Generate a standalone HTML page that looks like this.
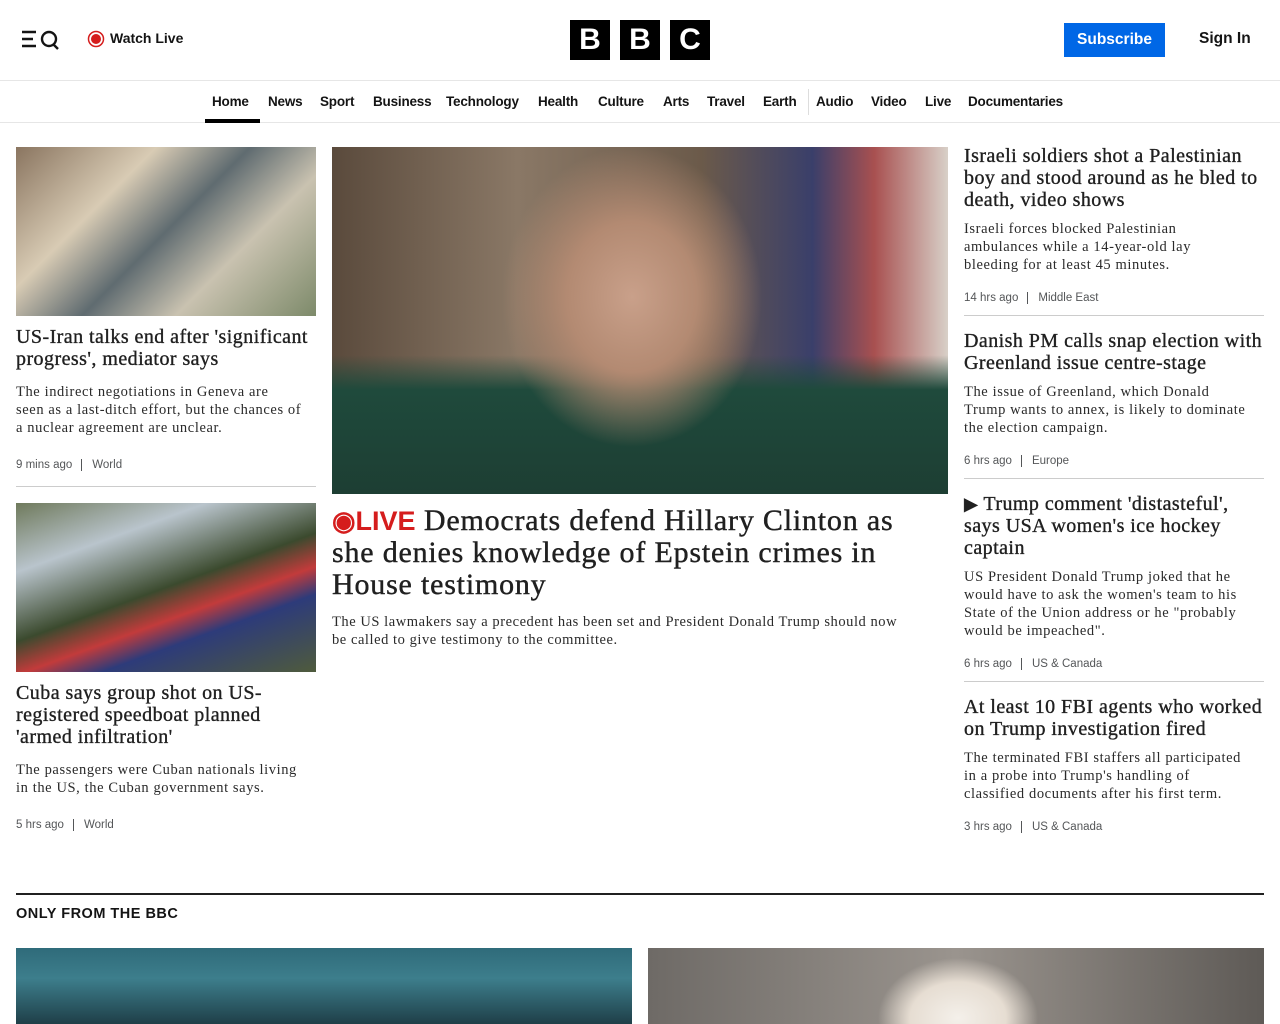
<!DOCTYPE html>
<html><head><meta charset="utf-8"><style>
*{margin:0;padding:0;box-sizing:border-box}
body{width:1280px;height:1024px;overflow:hidden;background:#fff;color:#141414;font-family:"Liberation Sans",sans-serif}
.hdr{height:81px;border-bottom:1px solid #e6e6e6;position:relative}
.nav{height:42px;border-bottom:1px solid #e6e6e6;position:relative}
.nav a{position:absolute;top:13px;font-size:13.5px;font-weight:bold;color:#141414;letter-spacing:-0.2px}
.abs{position:absolute}
h3{font-family:"Liberation Serif",serif;font-weight:normal;font-size:20px;line-height:22px;color:#202020;letter-spacing:0.45px;white-space:nowrap;-webkit-text-stroke:0.35px #202020}
p.s{font-family:"Liberation Serif",serif;font-size:14.5px;line-height:18px;color:#2a2a2a;letter-spacing:0.6px;white-space:nowrap}
.m{font-size:11.5px;color:#545658;position:absolute}
.m span{border-left:1px solid #545658;margin-left:9px;padding-left:10px}
.hr{position:absolute;height:1px;background:#ccc}
</style></head><body>
<div class="hdr">
 <svg class="abs" style="left:21px;top:30px" width="41" height="20" viewBox="0 0 41 20"><g stroke="#141414" stroke-width="2.4" fill="none"><path d="M1 2h14M1 9h11M1 16h14"/><circle cx="28" cy="9" r="7"/><path d="M32 14l5 5"/></g></svg>
 <svg class="abs" style="left:87px;top:30px" width="18" height="18"><circle cx="9" cy="9" r="7.5" fill="none" stroke="#d51d1d" stroke-width="1.5"/><circle cx="9" cy="9" r="5" fill="#d51d1d"/></svg>
 <div class="abs" style="left:110px;top:30px;font-size:14px;font-weight:bold">Watch Live</div>
 <div class="abs" style="left:570px;top:20px;display:flex;gap:10px">
  <div style="width:40px;height:40px;background:#000;color:#fff;font:bold 30px/40px 'Liberation Sans';text-align:center">B</div>
  <div style="width:40px;height:40px;background:#000;color:#fff;font:bold 30px/40px 'Liberation Sans';text-align:center">B</div>
  <div style="width:40px;height:40px;background:#000;color:#fff;font:bold 30px/40px 'Liberation Sans';text-align:center">C</div>
 </div>
 <div class="abs" style="left:1064px;top:23px;width:101px;height:34px;background:#0067e6;color:#fff;font-weight:bold;font-size:15.5px;line-height:34px;text-align:center">Subscribe</div>
 <div class="abs" style="left:1199px;top:30px;font-size:15.5px;font-weight:bold">Sign In</div>
</div>
<div class="nav">
 <a style="left:212px">Home</a><div class="abs" style="left:205px;top:38px;width:55px;height:4px;background:#000"></div>
 <a style="left:268px">News</a><a style="left:320px">Sport</a><a style="left:373px">Business</a><a style="left:446px">Technology</a><a style="left:538px">Health</a><a style="left:598px">Culture</a><a style="left:663px">Arts</a><a style="left:707px">Travel</a><a style="left:763px">Earth</a>
 <div class="abs" style="left:808px;top:8px;width:1px;height:26px;background:#ddd"></div>
 <a style="left:816px">Audio</a><a style="left:871px">Video</a><a style="left:925px">Live</a><a style="left:968px">Documentaries</a>
</div>

<!-- left -->
<div class="abs" style="left:16px;top:147px;width:300px;height:169px;background:linear-gradient(135deg,#8a7560 0%,#d8cbb4 30%,#5f6b70 50%,#c9c2b0 70%,#7d8a6a 100%)"></div>
<h3 class="abs" style="left:16px;top:326px">US-Iran talks end after 'significant<br>progress', mediator says</h3>
<p class="s abs" style="left:16px;top:383px">The indirect negotiations in Geneva are<br>seen as a last-ditch effort, but the chances of<br>a nuclear agreement are unclear.</p>
<div class="m" style="left:16px;top:459px">9 mins ago<span>World</span></div>
<div class="hr" style="left:16px;top:486px;width:300px"></div>
<div class="abs" style="left:16px;top:503px;width:300px;height:169px;background:linear-gradient(160deg,#6f7a5c 0%,#b9c4cc 25%,#3b4a2e 50%,#c23b3b 62%,#2d3b7a 72%,#4f5b3c 100%)"></div>
<h3 class="abs" style="left:16px;top:682px">Cuba says group shot on US-<br>registered speedboat planned<br>'armed infiltration'</h3>
<p class="s abs" style="left:16px;top:761px">The passengers were Cuban nationals living<br>in the US, the Cuban government says.</p>
<div class="m" style="left:16px;top:819px">5 hrs ago<span>World</span></div>

<!-- center -->
<div class="abs" style="left:332px;top:147px;width:616px;height:347px;background:radial-gradient(ellipse 130px 150px at 300px 150px,#c9a08a 0%,#b38a72 50%,transparent 100%),linear-gradient(180deg,transparent 60%,#1f4a3c 70%,#1d3e33 100%),linear-gradient(90deg,#5a4a3c 0%,#8a7866 30%,#6b5a4a 60%,#3a3f6a 78%,#a85050 88%,#d8d0c8 100%)"></div>
<div class="abs" style="left:332px;top:505px;white-space:nowrap;font-family:'Liberation Serif',serif;font-size:30px;line-height:32px;color:#202020;letter-spacing:0.8px;-webkit-text-stroke:0.4px #202020"><span style="color:#d51d1d;-webkit-text-stroke:0;font-family:'Liberation Sans';font-weight:bold;font-size:27px;letter-spacing:0">◉LIVE</span> Democrats defend Hillary Clinton as<br>she denies knowledge of Epstein crimes in<br>House testimony</div>
<p class="s abs" style="left:332px;top:613px;letter-spacing:0.55px">The US lawmakers say a precedent has been set and President Donald Trump should now<br>be called to give testimony to the committee.</p>

<!-- right -->
<h3 class="abs" style="left:964px;top:145px">Israeli soldiers shot a Palestinian<br>boy and stood around as he bled to<br>death, video shows</h3>
<p class="s abs" style="left:964px;top:220px">Israeli forces blocked Palestinian<br>ambulances while a 14-year-old lay<br>bleeding for at least 45 minutes.</p>
<div class="m" style="left:964px;top:292px">14 hrs ago<span>Middle East</span></div>
<div class="hr" style="left:964px;top:315px;width:300px"></div>
<h3 class="abs" style="left:964px;top:330px">Danish PM calls snap election with<br>Greenland issue centre-stage</h3>
<p class="s abs" style="left:964px;top:383px">The issue of Greenland, which Donald<br>Trump wants to annex, is likely to dominate<br>the election campaign.</p>
<div class="m" style="left:964px;top:455px">6 hrs ago<span>Europe</span></div>
<div class="hr" style="left:964px;top:478px;width:300px"></div>
<h3 class="abs" style="left:964px;top:493px"><span style="font-size:18px">▶</span> Trump comment 'distasteful',<br>says USA women's ice hockey<br>captain</h3>
<p class="s abs" style="left:964px;top:568px">US President Donald Trump joked that he<br>would have to ask the women's team to his<br>State of the Union address or he "probably<br>would be impeached".</p>
<div class="m" style="left:964px;top:658px">6 hrs ago<span>US &amp; Canada</span></div>
<div class="hr" style="left:964px;top:681px;width:300px"></div>
<h3 class="abs" style="left:964px;top:696px">At least 10 FBI agents who worked<br>on Trump investigation fired</h3>
<p class="s abs" style="left:964px;top:749px">The terminated FBI staffers all participated<br>in a probe into Trump's handling of<br>classified documents after his first term.</p>
<div class="m" style="left:964px;top:821px">3 hrs ago<span>US &amp; Canada</span></div>

<div class="abs" style="left:16px;top:893px;width:1248px;height:2px;background:#202020"></div>
<div class="abs" style="left:16px;top:906px;font-size:14.5px;font-weight:bold;letter-spacing:0.5px">ONLY FROM THE BBC</div>
<div class="abs" style="left:16px;top:948px;width:616px;height:76px;background:linear-gradient(180deg,#2f6b7a 0%,#3d7e8c 40%,#1f3f48 100%)"></div>
<div class="abs" style="left:648px;top:948px;width:616px;height:76px;background:radial-gradient(ellipse 80px 60px at 310px 70px,#f4f0ea 0%,#e6ddd2 60%,transparent 100%),linear-gradient(90deg,#6e6a66,#9a948e 50%,#5e5a56)"></div>
</body></html>
